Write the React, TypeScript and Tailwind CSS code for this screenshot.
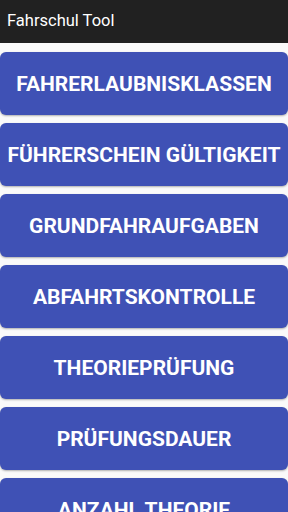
const items = [
  'FAHRERLAUBNISKLASSEN',
  'FÜHRERSCHEIN GÜLTIGKEIT',
  'GRUNDFAHRAUFGABEN',
  'ABFAHRTSKONTROLLE',
  'THEORIEPRÜFUNG',
  'PRÜFUNGSDAUER',
  'ANZAHL THEORIE',
];

export default function App() {
  return (
    <div className="h-[512px] w-[288px] overflow-hidden bg-[#fafafa] font-['Roboto',sans-serif]">
      <div className="flex h-[43px] items-center bg-[#212121] px-[7px] text-[16.5px] text-white">
        Fahrschul Tool
      </div>
      <div className="flex flex-col gap-[8px] pt-[9px]">
        {items.map((label) => (
          <button
            key={label}
            className="flex h-[63px] w-full shrink-0 items-center justify-center rounded-[6px] bg-[#3f51b5] pt-[2px] text-[21px] font-bold whitespace-nowrap text-white shadow-[0_1px_2px_rgba(0,0,0,0.3)]"
          >
            {label}
          </button>
        ))}
      </div>
    </div>
  );
}
